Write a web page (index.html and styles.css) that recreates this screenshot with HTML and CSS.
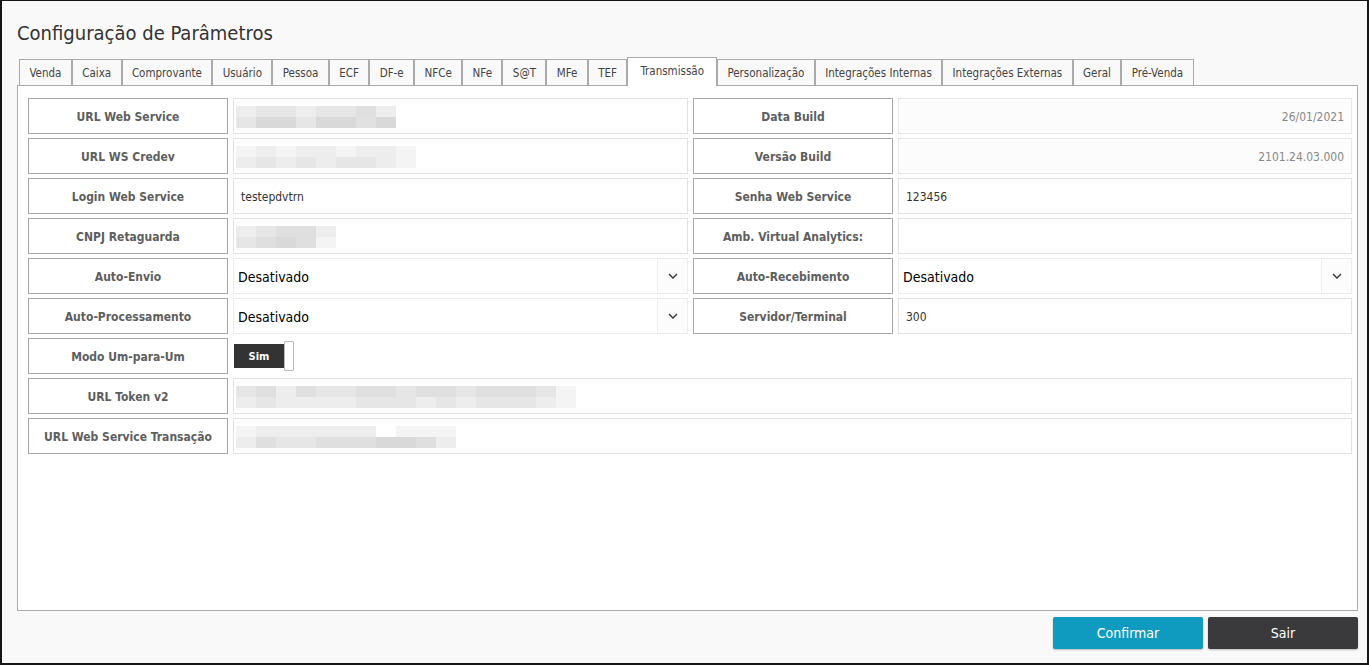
FILE: index.html
```html
<!DOCTYPE html>
<html lang="pt-BR">
<head>
<meta charset="utf-8">
<title>Configuração de Parâmetros</title>
<link rel="stylesheet" href="styles.css">
</head>
<body>
<div class="window">
  <h1 class="title">Configuração de Parâmetros</h1>
  <ul class="tabs">
    <li class="tab">Venda</li>
    <li class="tab">Caixa</li>
    <li class="tab">Comprovante</li>
    <li class="tab">Usuário</li>
    <li class="tab">Pessoa</li>
    <li class="tab">ECF</li>
    <li class="tab">DF-e</li>
    <li class="tab">NFCe</li>
    <li class="tab">NFe</li>
    <li class="tab">S@T</li>
    <li class="tab">MFe</li>
    <li class="tab">TEF</li>
    <li class="tab active">Transmissão</li>
    <li class="tab">Personalização</li>
    <li class="tab">Integrações Internas</li>
    <li class="tab">Integrações Externas</li>
    <li class="tab">Geral</li>
    <li class="tab">Pré-Venda</li>
  </ul>
  <div class="panel">
    <div class="form">
      <div class="label">URL Web Service</div>
      <div class="field">
        <div class="blur">
          <div class="brow"><i class="s1"></i><i class="s2"></i><i class="s2"></i><i class="s1"></i><i class="s2"></i><i class="s2"></i><i class="s3"></i><i class="s1"></i></div>
          <div class="brow"><i class="s2"></i><i class="s4"></i><i class="s4"></i><i class="s2"></i><i class="s4"></i><i class="s4"></i><i class="s5"></i><i class="s4"></i></div>
        </div>
      </div>
      <div class="label">Data Build</div>
      <div class="field disabled">26/01/2021</div>

      <div class="label">URL WS Credev</div>
      <div class="field">
        <div class="blur">
          <div class="brow"><i class="s0"></i><i class="s1"></i><i class="s0"></i><i class="s1"></i><i class="s1"></i><i class="s0"></i><i class="s1"></i><i class="s1"></i><i class="s0"></i></div>
          <div class="brow"><i class="s1"></i><i class="s2"></i><i class="s1"></i><i class="s2"></i><i class="s1"></i><i class="s2"></i><i class="s2"></i><i class="s1"></i><i class="s0"></i></div>
        </div>
      </div>
      <div class="label">Versão Build</div>
      <div class="field disabled">2101.24.03.000</div>

      <div class="label">Login Web Service</div>
      <div class="field">testepdvtrn</div>
      <div class="label">Senha Web Service</div>
      <div class="field">123456</div>

      <div class="label">CNPJ Retaguarda</div>
      <div class="field">
        <div class="blur">
          <div class="brow"><i class="s1"></i><i class="s2"></i><i class="s3"></i><i class="s3"></i><i class="s1"></i></div>
          <div class="brow"><i class="s2"></i><i class="s3"></i><i class="s4"></i><i class="s3"></i><i class="s0"></i></div>
        </div>
      </div>
      <div class="label">Amb. Virtual Analytics:</div>
      <div class="field"></div>

      <div class="label">Auto-Envio</div>
      <div class="field select"><span class="sel-text">Desativado</span><span class="sel-arrow"><svg width="10" height="6" viewBox="0 0 10 6"><path d="M1 1l4 4 4-4" fill="none" stroke="#333" stroke-width="1.4"/></svg></span></div>
      <div class="label">Auto-Recebimento</div>
      <div class="field select"><span class="sel-text">Desativado</span><span class="sel-arrow"><svg width="10" height="6" viewBox="0 0 10 6"><path d="M1 1l4 4 4-4" fill="none" stroke="#333" stroke-width="1.4"/></svg></span></div>

      <div class="label">Auto-Processamento</div>
      <div class="field select"><span class="sel-text">Desativado</span><span class="sel-arrow"><svg width="10" height="6" viewBox="0 0 10 6"><path d="M1 1l4 4 4-4" fill="none" stroke="#333" stroke-width="1.4"/></svg></span></div>
      <div class="label">Servidor/Terminal</div>
      <div class="field">300</div>

      <div class="label">Modo Um-para-Um</div>
      <div class="toggle-cell"><span class="toggle"><span class="toggle-on">Sim</span><span class="knob"></span></span></div>

      <div class="label">URL Token v2</div>
      <div class="field wide">
        <div class="blur">
          <div class="brow"><i class="s2"></i><i class="s3"></i><i class="s1"></i><i class="s3"></i><i class="s2"></i><i class="s2"></i><i class="s3"></i><i class="s3"></i><i class="s2"></i><i class="s3"></i><i class="s3"></i><i class="s2"></i><i class="s3"></i><i class="s3"></i><i class="s3"></i><i class="s2"></i><i class="s0"></i></div>
          <div class="brow"><i class="s1"></i><i class="s2"></i><i class="s1"></i><i class="s1"></i><i class="s1"></i><i class="s1"></i><i class="s2"></i><i class="s2"></i><i class="s2"></i><i class="s1"></i><i class="s2"></i><i class="s1"></i><i class="s2"></i><i class="s2"></i><i class="s2"></i><i class="s1"></i><i class="s0"></i></div>
        </div>
      </div>

      <div class="label">URL Web Service Transação</div>
      <div class="field wide">
        <div class="blur">
          <div class="brow"><i class="s0"></i><i class="s1"></i><i class="s1"></i><i class="s1"></i><i class="s1"></i><i class="s1"></i><i class="s1"></i><i class="e"></i><i class="s0"></i><i class="s0"></i><i class="s0"></i></div>
          <div class="brow"><i class="s1"></i><i class="s3"></i><i class="s2"></i><i class="s2"></i><i class="s3"></i><i class="s3"></i><i class="s3"></i><i class="s4"></i><i class="s4"></i><i class="s3"></i><i class="s1"></i></div>
        </div>
      </div>
    </div>
  </div>
  <div class="actions">
    <button class="btn btn-primary">Confirmar</button>
    <button class="btn btn-dark">Sair</button>
  </div>
</div>
</body>
</html>
```

FILE: styles.css
```css
* { box-sizing: border-box; }
html, body { margin: 0; padding: 0; }
body {
  background: #161616;
  font-family: "DejaVu Sans Condensed", "DejaVu Sans", sans-serif;
}
.window {
  width: 1369px;
  height: 665px;
  background: #f9f9f9;
  border-top: 1px solid #161616;
  border-left: 2px solid #161616;
  border-right: 2px solid #161616;
  border-bottom: 2px solid #161616;
  display: flex;
  flex-direction: column;
}
.title {
  margin: 0;
  padding: 20px 0 0 15px;
  height: 56px;
  font-weight: normal;
  font-size: 20px;
  line-height: 24px;
  color: #333;
}
.tabs {
  list-style: none;
  margin: 0 0 0 17px;
  padding: 0;
  height: 28px;
  display: flex;
  align-items: flex-end;
  position: relative;
  z-index: 1;
}
.tab {
  height: 26px;
  padding: 0 9.4px;
  border: 1px solid #aaa;
  border-bottom: none;
  background: #f9f9f9;
  font-size: 11.5px;
  line-height: 26px;
  color: #444;
  white-space: nowrap;
}
.tab.active {
  height: 29px;
  margin-bottom: -1px;
  background: #fff;
  line-height: 26px;
  padding-bottom: 3px;
  padding-left: 12px;
  padding-right: 12px;
}
.panel {
  margin: 0 9px 0 15px;
  height: 526px;
  border: 1px solid #aaa;
  background: #fff;
  padding: 12px 5px 0 10px;
}
.form {
  display: grid;
  grid-template-columns: 200px 455px 200px 1fr;
  grid-auto-rows: 36px;
  column-gap: 5px;
  row-gap: 4px;
}
.label {
  border: 1px solid #aaa;
  display: flex;
  align-items: center;
  justify-content: center;
  padding-top: 1px;
  font-weight: bold;
  font-size: 12px;
  color: #5e5e5e;
}
.field {
  border: 1px solid #e3e3e3;
  display: flex;
  align-items: center;
  padding: 1px 7px 0;
  font-size: 12px;
  color: #333;
  background: #fff;
}
.field.disabled {
  justify-content: flex-end;
  color: #888;
  background: #fcfcfc;
  border-color: #e8e8e8;
}
.field.wide { grid-column: 2 / 5; }
.blur {
  display: flex;
  flex-direction: column;
  margin-left: -5px;
}
.brow { display: flex; height: 11px; }
.brow i { display: block; width: 20px; height: 100%; }
.s0 { background: #f4f4f4; }
.s1 { background: #ededed; }
.s2 { background: #e6e6e6; }
.s3 { background: #dfdfdf; }
.s4 { background: #d9d9d9; }
.s5 { background: #e1e1e1; }
.e { background: transparent; }
.field.select {
  padding: 0;
  align-items: stretch;
  border-color: #ececec;
}
.sel-text {
  flex: 1;
  display: flex;
  align-items: center;
  padding: 1px 0 0 4px;
  font-size: 14px;
  color: #000;
}
.sel-arrow {
  width: 30px;
  border-left: 1px solid #efefef;
  display: flex;
  align-items: center;
  justify-content: center;
  background: #fcfcfc;
}
.toggle-cell {
  grid-column: 2 / 5;
  display: flex;
  align-items: center;
  padding-left: 1px;
}
.toggle {
  display: flex;
  align-items: center;
}
.toggle-on {
  width: 50px;
  height: 24px;
  background: #333;
  color: #fff;
  font-weight: bold;
  font-size: 11px;
  display: flex;
  align-items: center;
  justify-content: center;
}
.knob {
  width: 10px;
  height: 30px;
  background: #fff;
  border: 1px solid #bbb;
  border-radius: 1px;
}
.actions {
  display: flex;
  justify-content: flex-end;
  gap: 5px;
  margin: 6px 9px 0 0;
}
.btn {
  width: 150px;
  height: 32px;
  border: none;
  border-radius: 2px;
  font-family: "DejaVu Sans Condensed", "DejaVu Sans", sans-serif;
  font-size: 14px;
  color: #fff;
  box-shadow: 0 1px 2px rgba(0,0,0,0.25);
}
.btn-primary { background: #0f9bbf; }
.btn-dark { background: #3a3a3c; }
```
